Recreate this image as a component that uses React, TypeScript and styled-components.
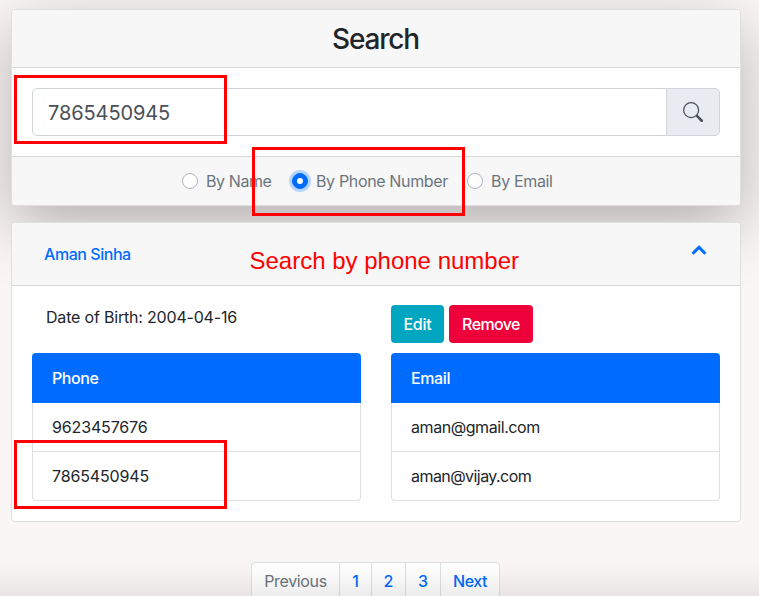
import React from 'react';
import styled, { createGlobalStyle, css } from 'styled-components';
import { FaChevronUp } from 'react-icons/fa';

const GlobalStyle = createGlobalStyle`
  *, *::before, *::after { box-sizing: border-box; }
  html { overflow: hidden; }
  body {
    margin: 0;
    overflow: hidden;
    background: #faf6f5;
    color: #212529;
    font-family: Inter, "Liberation Sans", sans-serif;
    font-size: 16px;
    line-height: 24px;
  }
  button, input { font: inherit; }
`;

const Page = styled.div`
  position: relative;
  height: 596px;
  overflow: hidden;
  padding: 9px 18px 0 11px;
`;

const Txt = styled.span<{ $ls?: number; $weight?: number }>`
  white-space: nowrap;
  letter-spacing: ${p => p.$ls ?? 0}px;
  font-weight: ${p => p.$weight ?? 400};
`;

const Card = styled.section<{ $raised?: boolean }>`
  position: relative;
  display: flex;
  flex-direction: column;
  background: #fff;
  border: 1px solid #dfdfdf;
  border-radius: 4px;
  ${p => p.$raised && css`
    height: 197px;
    box-shadow: 0 20px 64px rgba(0, 0, 0, 0.29);
  `}
`;

const SearchHeader = styled.header`
  height: 58px;
  padding: 12px 21px 12px 20px;
  background: #f7f7f7;
  border-bottom: 1px solid #d9d9d9;
  border-radius: 3px 3px 0 0;
  text-align: center;
`;

const Title = styled.h3`
  margin: 0;
  font-size: 28px;
  font-weight: 500;
  line-height: 35px;
  letter-spacing: -1.15px;
`;

const SearchBody = styled.div`
  height: 88px;
  padding: 20px;
`;

const InputGroup = styled.div`
  display: flex;
  height: 48px;
`;

const SearchInput = styled.input`
  flex: 1;
  min-width: 0;
  padding: 1px 16px 0 15px;
  border: 1px solid #ced4da;
  border-radius: 5px 0 0 5px;
  background: #fff;
  color: #495057;
  font-size: 20px;
  line-height: 30px;
  letter-spacing: -0.1px;
  outline: none;
`;

const SearchButton = styled.button`
  width: 54px;
  margin-left: -1px;
  padding: 0;
  display: flex;
  align-items: center;
  justify-content: center;
  border: 1px solid #ced4da;
  border-radius: 0 5px 5px 0;
  background: #e8ebf0;
  color: #495057;
`;

const SearchFooter = styled.footer`
  flex: 1;
  display: flex;
  justify-content: center;
  align-items: center;
  padding-right: 1px;
  background: #f7f7f7;
  border-top: 1px solid #d9d9d9;
  border-radius: 0 0 3px 3px;
  color: #6c757d;
`;

const Option = styled.label<{ $width: number }>`
  display: flex;
  align-items: center;
  gap: 8px;
  width: ${p => p.$width}px;
`;

const Radio = styled.span<{ $checked?: boolean }>`
  width: 16px;
  height: 16px;
  flex: none;
  display: flex;
  align-items: center;
  justify-content: center;
  border-radius: 50%;
  border: 1px solid #adb5bd;
  background: #fff;
  ${p => p.$checked && css`
    border-color: #006cff;
    background: #006cff;
    box-shadow: 0 0 0 3px #b5d3fb;
    &::after {
      content: '';
      width: 6px;
      height: 6px;
      border-radius: 50%;
      background: #fff;
    }
  `}
`;

const ContactCard = styled(Card)`
  margin-top: 16px;
  height: 300px;
`;

const ContactHeader = styled.header`
  display: flex;
  justify-content: space-between;
  height: 63px;
  padding: 19px 33px 0 32px;
  background: #f7f7f7;
  border-bottom: 1px solid #d9d9d9;
  border-radius: 3px 3px 0 0;
  color: #006cff;
`;

const Chevron = styled(FaChevronUp)`
  display: block;
  width: 16px;
  height: 16px;
  stroke: currentColor;
  stroke-width: 24px;
`;

const ContactBody = styled.div`
  display: grid;
  grid-template-columns: 1fr 1fr;
  column-gap: 30px;
  row-gap: 10px;
  padding: 19px 20px 20px;
`;

const Birth = styled.div`
  padding-left: 14px;
`;

const Actions = styled.div`
  display: flex;
  gap: 5px;
  height: 38px;
`;

const ActionButton = styled.button<{ $color: string; $width: number }>`
  width: ${p => p.$width}px;
  padding: 0;
  border: 0;
  border-radius: 4px;
  background: ${p => p.$color};
  color: #fff;
`;

const List = styled.ul`
  margin: 0;
  padding: 0;
  list-style: none;
`;

const ListHead = styled.li`
  height: 50px;
  padding: 13px 20px;
  border-radius: 4px 4px 0 0;
  background: #006cff;
  color: #fff;
`;

const ListItem = styled.li`
  height: 49px;
  padding: 12px 19px;
  border: 1px solid #dfdfdf;
  border-top: 0;
  &:last-child { border-radius: 0 0 4px 4px; }
`;

const Pagination = styled.nav`
  display: flex;
  width: 249px;
  height: 38px;
  margin: 40px 0 0 240px;
  border: 1px solid #dee2e6;
  border-radius: 4px;
  background: #fff;
`;

const PageLink = styled.a<{ $width: number; $muted?: boolean }>`
  display: flex;
  justify-content: center;
  width: ${p => p.$width}px;
  padding-top: 6px;
  color: ${p => (p.$muted ? '#6c757d' : '#006cff')};
  & + & { border-left: 1px solid #dee2e6; }
`;

const BottomShade = styled.div`
  position: absolute;
  left: 0;
  right: 0;
  bottom: 0;
  height: 40px;
  background: linear-gradient(rgba(0, 0, 0, 0), rgba(0, 0, 0, 0.015) 40%, rgba(0, 0, 0, 0.075));
  pointer-events: none;
`;

/* Annotations drawn over the page */
const Mark = styled.div<{ $x: number; $y: number }>`
  position: absolute;
  left: ${p => p.$x}px;
  top: ${p => p.$y}px;
  width: 213px;
  height: 69px;
  border: 3px solid #f00;
  pointer-events: none;
`;

const Note = styled.div`
  position: absolute;
  left: 249.5px;
  top: 247px;
  color: #f00;
  font: 24px/28px "Liberation Sans", sans-serif;
  white-space: nowrap;
`;

const SearchIcon = () => (
  <svg width="20" height="20" viewBox="0 0 16 16" fill="currentColor">
    <path fillRule="evenodd" d="M10.442 10.442a1 1 0 0 1 1.415 0l3.85 3.85a1 1 0 0 1-1.414 1.415l-3.85-3.85a1 1 0 0 1 0-1.415z" />
    <path fillRule="evenodd" d="M6.5 12a5.5 5.5 0 1 0 0-11 5.5 5.5 0 0 0 0 11zM13 6.5a6.5 6.5 0 1 1-13 0 6.5 6.5 0 0 1 13 0z" />
  </svg>
);

const options = [
  { label: 'By Name', ls: -0.4, width: 110, checked: false },
  { label: 'By Phone Number', ls: -0.35, width: 175, checked: true },
  { label: 'By Email', ls: -0.34, width: 102, checked: false },
];

const lists = [
  { title: 'Phone', ls: -0.4, items: [['9623457676', -0.15], ['7865450945', -0.15]] },
  { title: 'Email', ls: -0.4, items: [['aman@gmail.com', -0.43], ['aman@vijay.com', -0.56]] },
] as { title: string; ls: number; items: [string, number][] }[];

export default function App() {
  return (
    <>
      <GlobalStyle />
      <Page>
        <Card $raised>
          <SearchHeader><Title>Search</Title></SearchHeader>
          <SearchBody>
            <InputGroup>
              <SearchInput defaultValue="7865450945" aria-label="Search" />
              <SearchButton aria-label="Run search"><SearchIcon /></SearchButton>
            </InputGroup>
          </SearchBody>
          <SearchFooter>
            {options.map(o => (
              <Option key={o.label} $width={o.width}>
                <Radio $checked={o.checked} />
                <Txt $ls={o.ls}>{o.label}</Txt>
              </Option>
            ))}
          </SearchFooter>
        </Card>

        <ContactCard>
          <ContactHeader>
            <Txt $ls={-0.45} $weight={450}>Aman Sinha</Txt>
            <Chevron />
          </ContactHeader>
          <ContactBody>
            <Birth><Txt $ls={-0.19}>Date of Birth: 2004-04-16</Txt></Birth>
            <Actions>
              <ActionButton $color="#00a5bf" $width={53}><Txt $ls={-0.2} $weight={500}>Edit</Txt></ActionButton>
              <ActionButton $color="#ee003a" $width={84}><Txt $ls={-0.6} $weight={500}>Remove</Txt></ActionButton>
            </Actions>
            {lists.map(l => (
              <List key={l.title}>
                <ListHead><Txt $ls={l.ls} $weight={500}>{l.title}</Txt></ListHead>
                {l.items.map(([text, ls]) => (
                  <ListItem key={text}><Txt $ls={ls}>{text}</Txt></ListItem>
                ))}
              </List>
            ))}
          </ContactBody>
        </ContactCard>

        <Pagination>
          <PageLink $width={87} $muted><Txt $ls={-0.35}>Previous</Txt></PageLink>
          <PageLink $width={32}><Txt $weight={450}>1</Txt></PageLink>
          <PageLink $width={34}><Txt $weight={450}>2</Txt></PageLink>
          <PageLink $width={35}><Txt $weight={450}>3</Txt></PageLink>
          <PageLink $width={59}><Txt $ls={-0.45} $weight={450}>Next</Txt></PageLink>
        </Pagination>

        <BottomShade />
        <Mark $x={14} $y={75} />
        <Mark $x={252} $y={147} />
        <Mark $x={14} $y={440} />
        <Note>Search by phone number</Note>
      </Page>
    </>
  );
}
